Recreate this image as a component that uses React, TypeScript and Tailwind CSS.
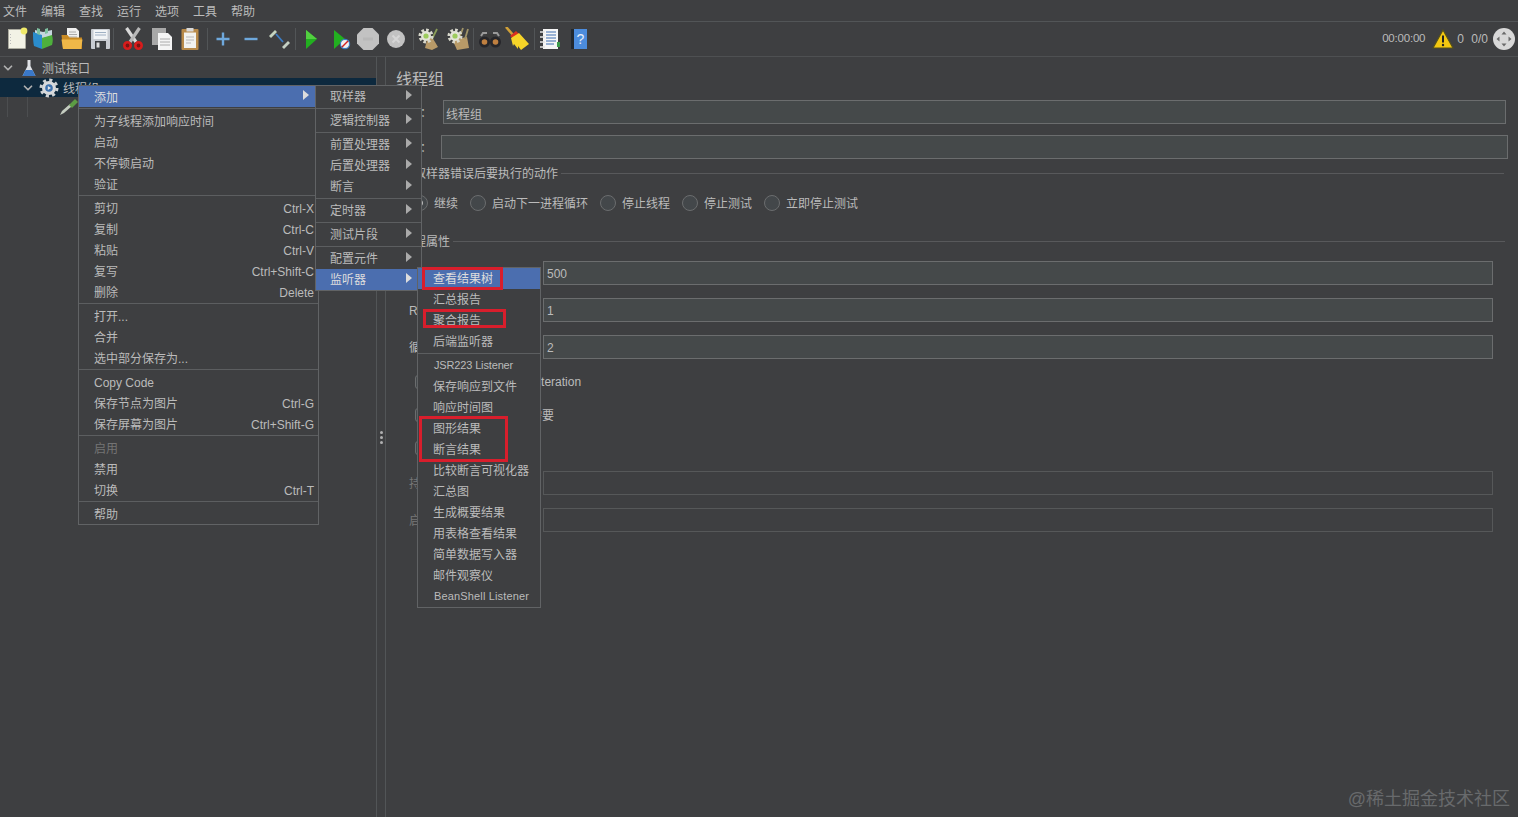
import { ChevronDown } from "lucide-react";

const Sep = ({ className }: { className: string }) => <div className={`h-[22px] w-px bg-[#525557] ${className}`} />;

const Btn = ({ className, children }: { className: string; children: React.ReactNode }) => (
  <div className={`h-6 w-6 shrink-0 ${className}`}>
    <svg viewBox="0 0 24 24" className="h-6 w-6">{children}</svg>
  </div>
);

const Gear = () => (
  <g>
    <circle cx="10" cy="9" r="6" fill="none" stroke="#d8d8cc" strokeWidth="3" strokeDasharray="2.6 2" />
    <circle cx="10" cy="9" r="5" fill="#e4e4d8" />
    <circle cx="10" cy="9" r="2.6" fill="#9ccb5c" />
  </g>
);

function Toolbar() {
  return (
    <div className="flex h-[35px] shrink-0 items-center border-b border-[#4e5052] pl-[5px]">
      {/* new */}
      <Btn className="">
        <rect x="3.5" y="2.5" width="17" height="19" fill="#f2f2e6" stroke="#b8b8a8" strokeWidth=".6" />
        <circle cx="19" cy="4" r="3.4" fill="#efe96a" />
        <path d="M5.5 7v12" stroke="#bbb" strokeWidth="1" strokeDasharray="1 2" />
      </Btn>
      {/* templates */}
      <Btn className="ml-[2px]">
        <path d="M4 3l8 2 9-2v6l-9 2-8-2z" fill="#c6d6de" />
        <path d="M2 5l9 3v14l-8-3c-1-4-1-9-1-14z" fill="#2a8ccc" />
        <path d="M11 11l10-3c1 3 1 7 0 10l-10 4z" fill="#4eb03c" />
        <path d="M6 1l3 1v6l-3-1zM14 2l3-1v5l-3 1z" fill="#7ec0a0" />
      </Btn>
      {/* open */}
      <Btn className="ml-[5px]">
        <path d="M7 1h9l3 3v11H7z" fill="#f0f0f0" />
        <path d="M9 5h7M9 7.5h8M9 10h8" stroke="#999" strokeWidth=".8" />
        <path d="M1.500 8h6l2 2.500H22V22H3z" fill="#c88a24" />
        <path d="M1.500 12.500h21L21 22H3z" fill="#f0b848" />
      </Btn>
      {/* save */}
      <Btn className="ml-1">
        <rect x="3" y="2" width="19" height="20" rx="1" fill="#c8ccd2" />
        <rect x="5.500" y="3" width="14" height="9" fill="#f2f4f6" />
        <path d="M7 5.500h11M7 8h11" stroke="#8aa0b8" strokeWidth=".8" />
        <rect x="7" y="14" width="11" height="8" fill="#3c3f42" />
        <rect x="8.500" y="15.500" width="3" height="5" fill="#ddd" />
      </Btn>
      <Sep className="ml-[1px]" />
      {/* cut */}
      <Btn className="ml-[7px]">
        <path d="M5.500 1l9.500 14" stroke="#d8d8d8" strokeWidth="3.200" />
        <path d="M18.500 1L9 15" stroke="#b8b8b8" strokeWidth="3.200" />
        <circle cx="6.500" cy="18.500" r="3.200" fill="#7a1414" stroke="#d81c1c" strokeWidth="2.600" />
        <circle cx="17.500" cy="18.500" r="3.200" fill="#7a1414" stroke="#d81c1c" strokeWidth="2.600" />
      </Btn>
      {/* copy */}
      <Btn className="ml-[5px]">
        <rect x="2" y="1" width="14" height="17" fill="#a8a8a8" />
        <path d="M8 6h10l4 4v13H8z" fill="#f4f4f4" />
        <path d="M10 12h10M10 15h10M10 18h10" stroke="#999" strokeWidth=".8" />
      </Btn>
      {/* paste */}
      <Btn className="ml-1">
        <rect x="3.500" y="2" width="17" height="21" rx="1" fill="#b88a48" />
        <rect x="6" y="5.500" width="12" height="15.500" fill="#f2f2ee" />
        <rect x="8.500" y="1" width="7" height="3.500" fill="#d8d8d8" />
        <path d="M8 10h8M8 13h8M8 16h5" stroke="#aaa" strokeWidth=".8" />
      </Btn>
      <Sep className="ml-[5px]" />
      {/* expand */}
      <Btn className="ml-[3px]">
        <path d="M12 5.500v13M5.500 12h13" stroke="#6ea8dc" strokeWidth="2.400" />
      </Btn>
      {/* collapse */}
      <Btn className="ml-1">
        <path d="M5.500 12h13" stroke="#6ea8dc" strokeWidth="2.400" />
      </Btn>
      {/* toggle */}
      <Btn className="ml-1">
        <path d="M3 10l6-6" stroke="#c4d4c0" strokeWidth="2.800" />
        <path d="M16 21l6-6" stroke="#c4d0c4" strokeWidth="2.800" />
        <path d="M9 7l7 8" stroke="#3c7cc4" strokeWidth="1.800" />
      </Btn>
      <Sep className="ml-1" />
      {/* start */}
      <Btn className="ml-[3px]">
        <path d="M7 3l11 9-11 10z" fill="#22b020" />
        <path d="M7 3l11 9H7z" fill="#52d040" />
      </Btn>
      {/* start no pauses */}
      <Btn className="ml-[5px]">
        <path d="M6 3l11 9-11 10z" fill="#22b020" />
        <circle cx="17" cy="17" r="4.600" fill="#f0f0f0" stroke="#3c7cc4" strokeWidth="1.200" />
        <path d="M14 20l6-6" stroke="#d42020" strokeWidth="1.400" />
      </Btn>
      {/* stop */}
      <Btn className="ml-1">
        <path d="M7.500 1h9L23 7.500v9L16.500 23h-9L1 16.500v-9z" fill="#c2c2c2" />
        <path d="M7 12h10" stroke="#b8b8b8" strokeWidth="3" />
      </Btn>
      {/* shutdown */}
      <Btn className="ml-1">
        <circle cx="12" cy="12" r="9" fill="#c2c2c2" />
        <path d="M8.500 8.500l7 7M15.500 8.500l-7 7" stroke="#d6d6d6" strokeWidth="2" />
      </Btn>
      <Sep className="ml-[5px]" />
      {/* clear */}
      <Btn className="ml-[2px]">
        <path d="M11 13l5-3 6 10-6 3-7-2z" fill="#b89a68" />
        <path d="M21 2l-5 10" stroke="#8a9c58" strokeWidth="1.800" />
        <Gear />
      </Btn>
      {/* clear all */}
      <Btn className="ml-[5px]">
        <path d="M8 14l4-2 10-2 2 11-12 2z" fill="#b89a68" />
        <path d="M18 1l-4 11M23 2l-3 10" stroke="#a09468" strokeWidth="1.800" />
        <Gear />
      </Btn>
      <Sep className="ml-1" />
      {/* search */}
      <Btn className="ml-1">
        <rect x="8" y="7" width="8" height="6" fill="#3a3a3a" />
        <circle cx="6.500" cy="15" r="5.500" fill="#26262a" />
        <circle cx="17.500" cy="15" r="5.500" fill="#26262a" />
        <circle cx="6.500" cy="15" r="2.800" fill="#c08040" />
        <circle cx="17.500" cy="15" r="2.800" fill="#c08040" />
        <path d="M3 9l2-3h4M21 9l-2-3h-4" stroke="#9a9a9a" strokeWidth="2" fill="none" />
      </Btn>
      {/* reset search */}
      <Btn className="ml-[3px]">
        <path d="M1 0l8 9" stroke="#d0a038" strokeWidth="2.600" />
        <path d="M5 9l6-5 3 3-5 5z" fill="#d83020" />
        <path d="M6 11l8-5 10 11-8 6-3-4 0 3-4-5-1 2z" fill="#f6d428" />
      </Btn>
      <Sep className="ml-[5px]" />
      {/* log viewer */}
      <Btn className="ml-[3px]">
        <rect x="5" y="2" width="15" height="20" fill="#f6f6f6" />
        <path d="M8 5h10M8 8h10M8 11h10M8 14h10M8 17h8" stroke="#3c6cb0" strokeWidth="1.200" />
        <path d="M2 5h5M2 10h5M2 15h5M2 20h5" stroke="#e4e4e4" strokeWidth="1.600" />
        <rect x="19" y="15" width="3" height="5" fill="#3c9c4c" />
      </Btn>
      {/* help */}
      <Btn className="ml-[5px]">
        <rect x="4" y="2" width="5" height="20" fill="#22282e" />
        <rect x="7" y="2" width="13" height="20" fill="#4c8cdc" />
        <text x="13.500" y="17" fontSize="14" textAnchor="middle" fill="#e8f0f8" fontFamily="Liberation Sans, sans-serif">?</text>
      </Btn>

      <div className="ml-auto flex items-center pr-[3px] text-[#bbbbbb]">
        <span className="text-[11.5px] tracking-[-0.2px]">00:00:00</span>
        <svg viewBox="0 0 22 20" className="ml-[7px] h-5 w-[22px]">
          <path d="M11 1l10 18H1z" fill="#f4c810" stroke="#55501c" strokeWidth="1.200" />
          <path d="M11 6.500v7" stroke="#222" strokeWidth="2" />
          <circle cx="11" cy="16" r="1.200" fill="#222" />
        </svg>
        <span className="ml-[3px] w-[8px] text-xs">0</span>
        <span className="ml-[6px] text-xs">0/0</span>
        <svg viewBox="0 0 22 22" className="ml-[5px] h-[22px] w-[22px]">
          <circle cx="11" cy="11" r="11" fill="#d8d8d8" />
          <path d="M11 3.500l2.500 3h-5zM11 18.500l2.500-3h-5zM3.500 11l3-2.500v5zM18.500 11l-3-2.500v5z" fill="#6a6a6a" />
        </svg>
      </div>
    </div>
  );
}

function Tree() {
  return (
    <div className="w-[377px] shrink-0 border-r border-[#525557] pt-px text-[#bbbbbb]">
      <div className="flex h-5 items-center pl-[1px]">
        <ChevronDown size={14} strokeWidth={3} className="text-[#b0b0b0]" />
        <svg viewBox="0 0 18 18" className="ml-[5px] h-[18px] w-[18px]">
          <path d="M7.500 1h3v6l5 10h-13l5-10z" fill="#dfe2e6" />
          <path d="M5.500 11h7l3 6h-13z" fill="#3a78c8" />
        </svg>
        <span className="ml-[4px] pt-[2px]">测试接口</span>
      </div>
      <div className="flex h-[19px] items-center bg-[#0d293e] pl-[21px]">
        <ChevronDown size={14} strokeWidth={3} className="text-[#b0b0b0]" />
        <svg viewBox="0 0 20 20" className="ml-[4px] h-5 w-5">
          <circle cx="10" cy="10" r="8" fill="none" stroke="#cfd2d4" strokeWidth="3" strokeDasharray="3.100 3.180" />
          <circle cx="10" cy="10" r="7" fill="#d8dadc" />
          <circle cx="10" cy="10" r="3.800" fill="#3e72ae" />
          <path d="M8.800 8l3.200 2-3.200 2z" fill="#e8e8e8" />
        </svg>
        <span className="ml-[4px] pt-[2px]">线程组</span>
      </div>
      <div className="flex h-5">
        <div className="ml-[7px] h-full w-px bg-[#4c4e50]" />
        <div className="ml-[19px] h-full w-px bg-[#4c4e50]" />
        <svg viewBox="0 0 18 18" className="ml-[32px] h-[18px] w-[18px]">
          <path d="M0 18l2-4 8-7 2 2-8 7z" fill="#c4ccc0" />
          <path d="M9 8l6-6 3 3-6 6z" fill="#5c9c44" />
        </svg>
      </div>
    </div>
  );
}

const Field = ({ label, value, disabled }: { label: string; value?: string; disabled?: boolean }) => (
  <div className={`flex h-6 items-center pl-[23px] pr-[25px] ${disabled ? "text-[#777777]" : ""}`}>
    <span className="w-[134px] shrink-0 whitespace-nowrap pt-[2px]">{label}</span>
    <input
      readOnly
      value={value ?? ""}
      className={`h-6 min-w-0 flex-1 border px-[3px] pt-[2px] text-[#bbbbbb] outline-none ${disabled ? "border-[#565859] bg-[#3e3f41]" : "border-[#6b6d6e] bg-[#45494a]"}`}
    />
  </div>
);

const Radio = ({ label, className, checked }: { label: string; className: string; checked?: boolean }) => (
  <div className={`flex items-center ${className}`}>
    <div className="flex h-4 w-4 items-center justify-center rounded-full border border-[#6b6d6e] bg-[#43474a]">
      {checked && <div className="h-[6px] w-[6px] rounded-full bg-[#bbbbbb]" />}
    </div>
    <span className="ml-[6px] pt-[2px]">{label}</span>
  </div>
);

const Check = ({ label, className, textClass }: { label: string; className: string; textClass: string }) => (
  <div className={`flex h-4 items-center pl-[29px] ${className}`}>
    <div className="h-[14px] w-[14px] rounded-[3px] border border-[#6b6d6e] bg-[#43474a]" />
    <span className={textClass}>{label}</span>
  </div>
);

function Panel() {
  return (
    <div className="min-w-0 flex-1 border-l border-[#525557] text-[#bbbbbb]">
      <div className="pl-[10px] pt-[12px] text-base leading-[22px]">线程组</div>
      <div className="mt-[9px] flex h-6 items-center pl-[10px] pr-[12px]">
        <span className="w-[47px] shrink-0 pt-[2px]">名称：</span>
        <input readOnly value="线程组" className="h-6 min-w-0 flex-1 border border-[#6b6d6e] bg-[#45494a] px-[2px] pt-[2px] text-[#bbbbbb] outline-none" />
      </div>
      <div className="mt-[11px] flex h-6 items-center pl-[10px] pr-[10px]">
        <span className="w-[45px] shrink-0 pt-[2px]">注释：</span>
        <input readOnly value="" className="h-6 min-w-0 flex-1 border border-[#6b6d6e] bg-[#45494a] outline-none" />
      </div>
      <div className="mt-[6px] flex h-4 items-center pl-[28px] pr-[14px]">
        <span className="whitespace-nowrap pt-[2px]">取样器错误后要执行的动作</span>
        <div className="ml-[3px] h-px flex-1 bg-[#58595b]" />
      </div>
      <div className="mt-3 flex h-5 items-center pl-[26px]">
        <Radio label="继续" className="" checked />
        <Radio label="启动下一进程循环" className="ml-3" />
        <Radio label="停止线程" className="ml-3" />
        <Radio label="停止测试" className="ml-3" />
        <Radio label="立即停止测试" className="ml-3" />
      </div>
      <div className="mt-5 flex h-4 items-center pl-4 pr-[13px]">
        <span className="whitespace-nowrap pt-[2px]">线程属性</span>
        <div className="ml-[3px] h-px flex-1 bg-[#58595b]" />
      </div>
      <div className="mt-3"><Field label="线程数：" value="500" /></div>
      <div className="mt-[13px]"><Field label="Ramp-Up时间(秒)：" value="1" /></div>
      <div className="mt-[13px]"><Field label="循环次数" value="2" /></div>
      <Check label="Same user on each iteration" className="mt-[15px]" textClass="ml-[2px]" />
      <Check label="延迟创建线程直到需要" className="mt-[17px]" textClass="ml-[5px] pt-[2px]" />
      <Check label="调度器" className="mt-[17px]" textClass="ml-[5px]" />
      <div className="mt-[15px]"><Field label="持续时间（秒）" disabled /></div>
      <div className="mt-[13px]"><Field label="启动延迟（秒）" disabled /></div>
    </div>
  );
}

type Item = { t: string; k?: string; a?: boolean; on?: boolean; off?: boolean; c?: string } | "-";

const MenuList = ({ items, className, pl, textPad }: { items: Item[]; className: string; pl: string; textPad?: string }) => (
  <div className={`absolute border border-[#616365] bg-[#3e3f41] text-[#bbbbbb] ${className}`}>
    {items.map((it, i) =>
      it === "-" ? (
        <div key={i} className="my-px h-px bg-[#5c5e60]" />
      ) : (
        <div key={i} className={`flex h-[21px] items-center whitespace-nowrap pr-1 ${pl} ${it.on ? "bg-[#4b6eaf] text-[#dddddd]" : ""} ${it.off ? "text-[#747474]" : ""}`}>
          <span className={`${textPad ?? ""} ${it.c ?? ""}`}>{it.t}</span>
          {it.k && <span className={`ml-auto ${textPad ?? ""}`}>{it.k}</span>}
          {it.a && (
            <svg viewBox="0 0 6 10" className="mb-1 ml-auto h-[10px] w-[6px]">
              <path d="M0 0l6 5-6 5z" fill={it.on ? "#dddddd" : "#aaaaaa"} />
            </svg>
          )}
        </div>
      )
    )}
  </div>
);

const mainMenu: Item[] = [
  { t: "添加", a: true, on: true },
  "-",
  { t: "为子线程添加响应时间" }, { t: "启动" }, { t: "不停顿启动" }, { t: "验证" },
  "-",
  { t: "剪切", k: "Ctrl-X" }, { t: "复制", k: "Ctrl-C" }, { t: "粘贴", k: "Ctrl-V" }, { t: "复写", k: "Ctrl+Shift-C" }, { t: "删除", k: "Delete" },
  "-",
  { t: "打开..." }, { t: "合并" }, { t: "选中部分保存为..." },
  "-",
  { t: "Copy Code" }, { t: "保存节点为图片", k: "Ctrl-G" }, { t: "保存屏幕为图片", k: "Ctrl+Shift-G" },
  "-",
  { t: "启用", off: true }, { t: "禁用" }, { t: "切换", k: "Ctrl-T" },
  "-",
  { t: "帮助" },
];

const addMenu: Item[] = [
  { t: "取样器", a: true },
  "-",
  { t: "逻辑控制器", a: true },
  "-",
  { t: "前置处理器", a: true }, { t: "后置处理器", a: true }, { t: "断言", a: true },
  "-",
  { t: "定时器", a: true },
  "-",
  { t: "测试片段", a: true },
  "-",
  { t: "配置元件", a: true }, { t: "监听器", a: true, on: true },
];

const listenerMenu: Item[] = [
  { t: "查看结果树", on: true }, { t: "汇总报告" }, { t: "聚合报告" }, { t: "后端监听器" },
  "-",
  { t: "JSR223 Listener", c: "text-[11px] tracking-[-0.15px] pl-px" }, { t: "保存响应到文件" }, { t: "响应时间图" }, { t: "图形结果" }, { t: "断言结果" },
  { t: "比较断言可视化器" }, { t: "汇总图" }, { t: "生成概要结果" }, { t: "用表格查看结果" }, { t: "简单数据写入器" }, { t: "邮件观察仪" }, { t: "BeanShell Listener", c: "text-[11px] tracking-[0.15px] pl-px" },
];

export default function App() {
  return (
    <div className="relative flex h-[817px] w-[1518px] flex-col overflow-hidden bg-[#3e3f41] font-['Liberation_Sans','Noto_Sans_CJK_SC',sans-serif] text-xs text-[#bbbbbb]">
      <div className="flex h-[22px] shrink-0 items-center gap-[14px] border-b border-[#525557] pl-[3px]">
        {["文件", "编辑", "查找", "运行", "选项", "工具", "帮助"].map((m) => (
          <span key={m} className="pt-[2px]">{m}</span>
        ))}
      </div>
      <Toolbar />
      <div className="flex min-h-0 flex-1">
        <Tree />
        <div className="flex w-2 shrink-0 flex-col items-center justify-center gap-[2px]">
          <div className="h-[3px] w-[3px] rounded-full bg-[#b0b0b0]" />
          <div className="h-[3px] w-[3px] rounded-full bg-[#b0b0b0]" />
          <div className="h-[3px] w-[3px] rounded-full bg-[#b0b0b0]" />
        </div>
        <Panel />
      </div>

      <MenuList items={mainMenu} pl="pl-[15px]" textPad="pt-[2px]" className="left-[78px] top-[85px] w-[241px] [&_svg]:mr-[5px]" />
      <MenuList items={addMenu} pl="pl-[14px]" className="left-[315px] top-[85px] w-[107px] [&>div]:pr-[9px]" />
      <MenuList items={listenerMenu} pl="pl-[15px]" className="left-[417px] top-[267px] w-[124px]" />

      <div className="absolute left-[422px] top-[267px] h-[23px] w-[81px] border-[3px] border-[#d81e2c]" />
      <div className="absolute left-[423px] top-[309px] h-[19px] w-[83px] border-[3px] border-[#d81e2c]" />
      <div className="absolute left-[419px] top-[416px] h-[46px] w-[89px] border-[3px] border-[#d81e2c]" />

      <div className="absolute bottom-1 right-2 whitespace-nowrap text-lg text-[#686a6c]">@稀土掘金技术社区</div>
    </div>
  );
}
